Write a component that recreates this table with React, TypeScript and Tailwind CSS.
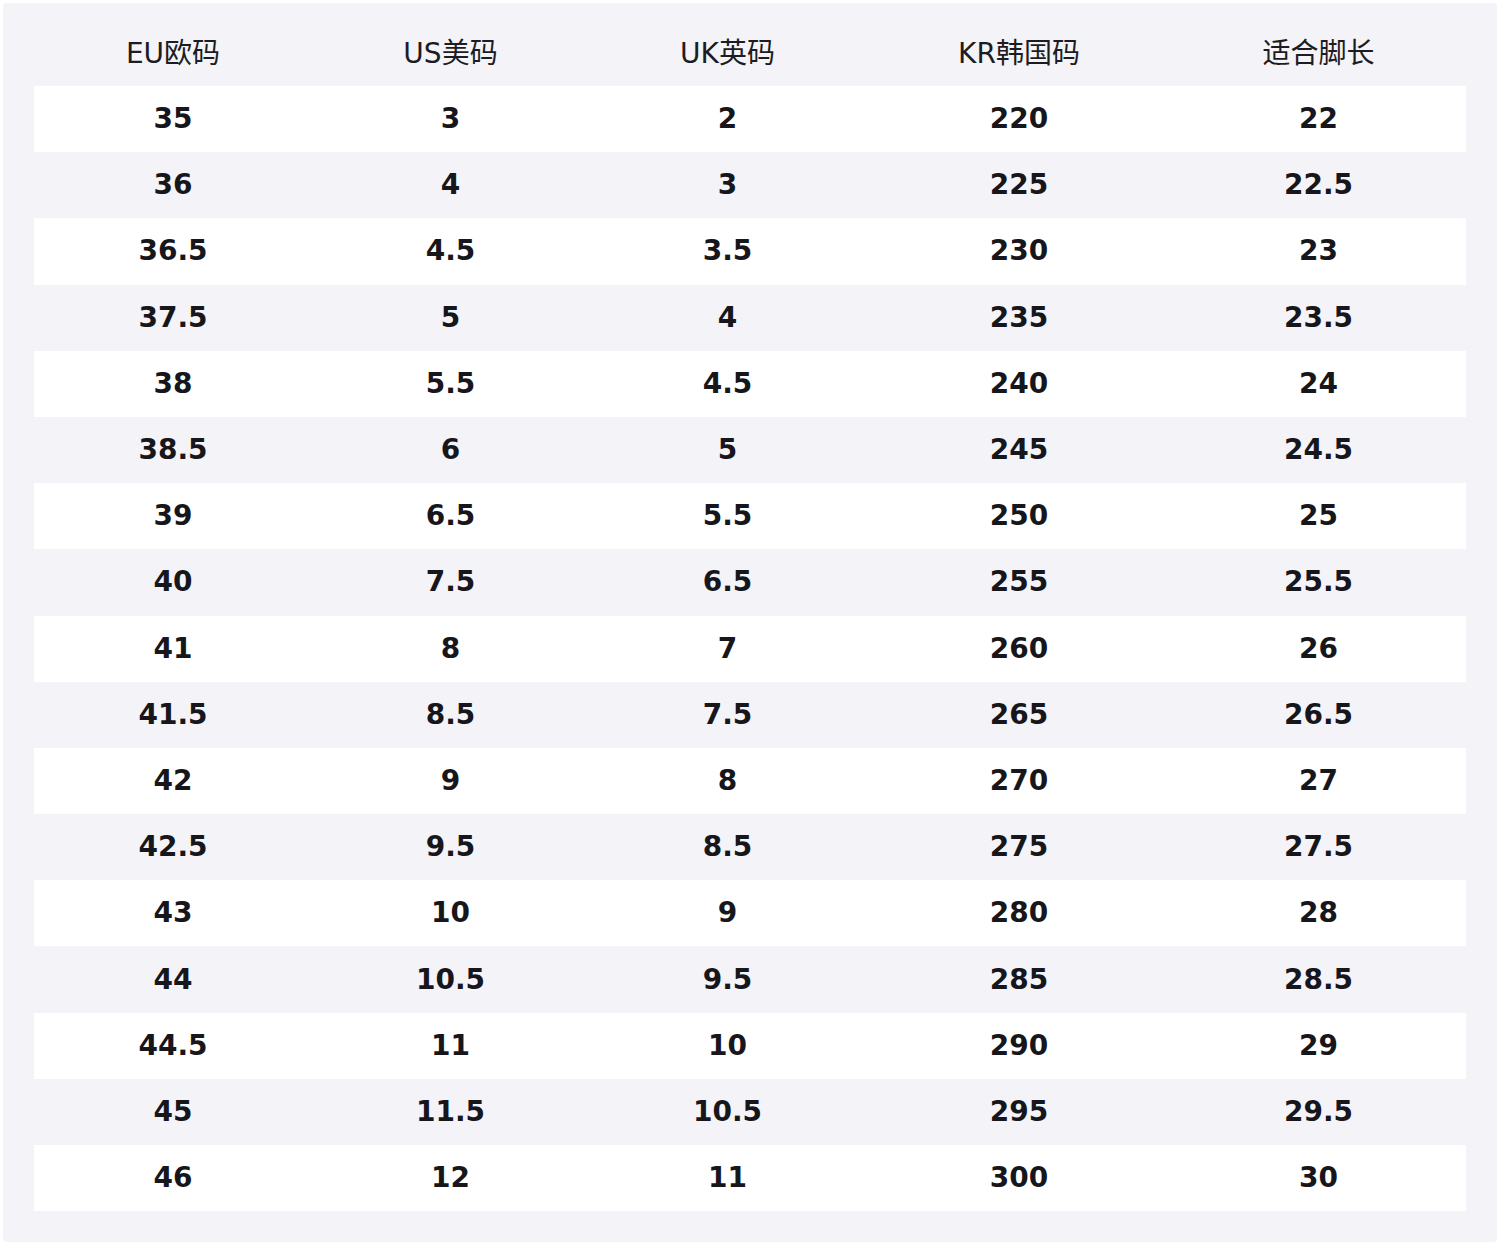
const headers = ["EU欧码", "US美码", "UK英码", "KR韩国码", "适合脚长"];

const rows = [
  ["35", "3", "2", "220", "22"],
  ["36", "4", "3", "225", "22.5"],
  ["36.5", "4.5", "3.5", "230", "23"],
  ["37.5", "5", "4", "235", "23.5"],
  ["38", "5.5", "4.5", "240", "24"],
  ["38.5", "6", "5", "245", "24.5"],
  ["39", "6.5", "5.5", "250", "25"],
  ["40", "7.5", "6.5", "255", "25.5"],
  ["41", "8", "7", "260", "26"],
  ["41.5", "8.5", "7.5", "265", "26.5"],
  ["42", "9", "8", "270", "27"],
  ["42.5", "9.5", "8.5", "275", "27.5"],
  ["43", "10", "9", "280", "28"],
  ["44", "10.5", "9.5", "285", "28.5"],
  ["44.5", "11", "10", "290", "29"],
  ["45", "11.5", "10.5", "295", "29.5"],
  ["46", "12", "11", "300", "30"],
];

const cols = "grid grid-cols-[278px_277px_277px_306px_293px]";

export default function App() {
  return (
    <div className="w-[1500px] h-[1245px] bg-white p-[3px] font-['DejaVu_Sans','Noto_Sans_CJK_SC',sans-serif]">
      <div className="h-full bg-[#f3f3f8] rounded-[4px] px-[31px] pb-[31px]">
        {/* header */}
        <div className={`${cols} h-[83px] items-center pt-[19px] text-[28px] text-[#1c1c22]`}>
          {headers.map((h) => (
            <div key={h} className="text-center leading-none">
              {h}
            </div>
          ))}
        </div>

        {/* rows */}
        <div>
          {rows.map((r, i) => (
            <div
              key={r[0]}
              className={`${cols} h-[66.2px] items-center text-[28px] font-bold text-[#16161b] ${
                i % 2 === 0 ? "bg-white" : "bg-transparent"
              }`}
            >
              {r.map((v, j) => (
                <div key={j} className="text-center leading-none">
                  {v}
                </div>
              ))}
            </div>
          ))}
        </div>
      </div>
    </div>
  );
}
